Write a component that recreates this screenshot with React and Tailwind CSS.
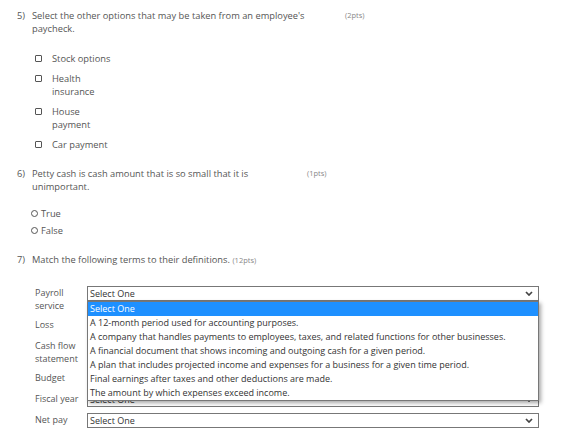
import React from "react";

const font = { fontFamily: '"Open Sans", "Noto Sans", sans-serif' };

function Checkbox({ children }) {
  return (
    <div className="flex items-start">
      <span className="mt-[3px] ml-[35px] h-[7px] w-[7px] rounded-[1px] border border-[#555] bg-white"></span>
      <span className="ml-[10px] leading-[13px]">{children}</span>
    </div>
  );
}

function Radio({ children }) {
  return (
    <div className="flex items-center h-[13px]">
      <span className="ml-[31px] h-[7px] w-[7px] rounded-full border border-[#555] bg-white"></span>
      <span className="ml-[3px]">{children}</span>
    </div>
  );
}

function Chevron() {
  return (
    <svg width="8" height="5" viewBox="0 0 8 5" className="mr-[5px]">
      <path d="M1 1 L4 4 L7 1" fill="none" stroke="#444" strokeWidth="1.7" />
    </svg>
  );
}

function Select({ children }) {
  return (
    <div className="relative flex h-[15px] w-[452px] items-center justify-between border border-[#777] bg-white">
      <span className="pl-[2px] text-[#333]">Select One</span>
      <Chevron />
      {children}
    </div>
  );
}

function MatchRow({ label, children }) {
  return (
    <div className="flex items-start">
      <div className="ml-[35px] w-[52px] leading-[13px]">{label}</div>
      {children || <Select />}
    </div>
  );
}

const options = [
  "A 12-month period used for accounting purposes.",
  "A company that handles payments to employees, taxes, and related functions for other businesses.",
  "A financial document that shows incoming and outgoing cash for a given period.",
  "A plan that includes projected income and expenses for a business for a given time period.",
  "Final earnings after taxes and other deductions are made.",
  "The amount by which expenses exceed income.",
];

export default function App() {
  return (
    <div style={font} className="h-[445px] w-[563px] overflow-hidden bg-white text-[9px] leading-[13px] text-[#555]">
      <div className="pt-[9px]">
        <div className="text-[9.3px]">
          {/* Q5 */}
          <div className="flex items-start">
            <span className="ml-[17px] w-[15px]">5)</span>
            <span className="w-[313px]">
              Select the other options that may be taken from an employee's
              <br />
              paycheck.
            </span>
            <span className="text-[7.5px] text-[#888]">(2pts)</span>
          </div>
          <div className="mt-[17px] flex flex-col gap-[7px]">
            <Checkbox>Stock options</Checkbox>
            <Checkbox>
              Health
              <br />
              insurance
            </Checkbox>
            <Checkbox>
              House
              <br />
              payment
            </Checkbox>
            <Checkbox>Car payment</Checkbox>
          </div>

          {/* Q6 */}
          <div className="mt-[16px] flex items-start">
            <span className="ml-[17px] w-[15px]">6)</span>
            <span className="w-[275px]">
              Petty cash is cash amount that is so small that it is
              <br />
              unimportant.
            </span>
            <span className="text-[7.5px] text-[#888]">(1pts)</span>
          </div>
          <div className="mt-[14px] flex flex-col gap-[4px]">
            <Radio>True</Radio>
            <Radio>False</Radio>
          </div>

          {/* Q7 */}
          <div className="mt-[16px] flex items-start">
            <span className="ml-[17px] w-[15px]">7)</span>
            <span>
              Match the following terms to their definitions.{" "}
              <span className="text-[7.5px] text-[#888]">(12pts)</span>
            </span>
          </div>
        </div>

        <div className="mt-[19px] flex flex-col gap-[6px]">
          <MatchRow
            label={
              <>
                Payroll
                <br />
                service
              </>
            }
          >
            <Select>
              <div className="absolute left-[-1px] top-[14px] z-10 w-[452px] border border-[#777] bg-white shadow-[2px_2px_4px_rgba(0,0,0,0.35)]">
                <div className="h-[14px] bg-[#1e90ff] pl-[2px] leading-[14px] text-white">Select One</div>
                {options.map((o) => (
                  <div key={o} className="h-[14px] pl-[2px] leading-[14px] text-[#333]">
                    {o}
                  </div>
                ))}
              </div>
            </Select>
          </MatchRow>
          <MatchRow label="Loss" />
          <MatchRow
            label={
              <>
                Cash flow
                <br />
                statement
              </>
            }
          />
          <MatchRow label="Budget" />
          <MatchRow label="Fiscal year" />
          <MatchRow label="Net pay" />
        </div>
      </div>
    </div>
  );
}
